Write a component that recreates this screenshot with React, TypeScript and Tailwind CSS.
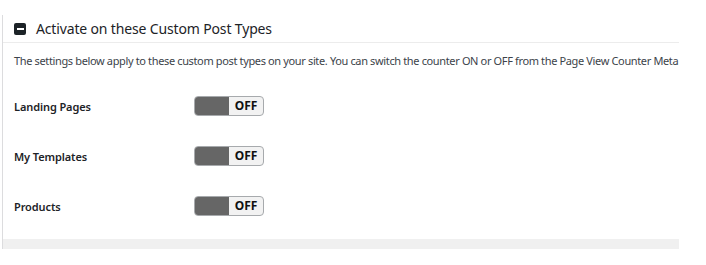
import React from "react";

function Toggle() {
  return (
    <div className="flex h-[20px] w-[70px] overflow-hidden rounded-[4px] border border-[#a7aaad] bg-[#f2f2f2]">
      <div className="h-full w-[34px] bg-[#666666]" />
      <div className="flex flex-1 items-center justify-center text-[12px] font-bold text-[#111]">OFF</div>
    </div>
  );
}

const rows = ["Landing Pages", "My Templates", "Products"];

export default function App() {
  return (
    <div className="h-[265px] w-[706px] bg-white pt-[15px] pl-[2px]" style={{ fontFamily: '"Noto Sans", "Open Sans", sans-serif' }}>
      <div className="w-[677px] border-l border-[#dcdcde]">
        <div className="flex h-[28px] items-center gap-[10px] border-b border-[#ececec] pl-[11px]">
          <div className="flex h-[12px] w-[12px] items-center justify-center rounded-[2px] bg-[#1d2327]">
            <div className="h-[2px] w-[7px] bg-white" />
          </div>
          <div className="text-[14px] tracking-[-0.15px] text-[#1d2327]">Activate on these Custom Post Types</div>
        </div>
        <div className="overflow-hidden whitespace-nowrap pl-[11px] pt-[10px] text-[11px] tracking-[-0.36px] text-[#3c434a]">
          The settings below apply to these custom post types on your site. You can switch the counter ON or OFF from the Page View Counter Meta box.
        </div>
        <div className="mt-[11px] flex flex-col">
          {rows.map((r) => (
            <div key={r} className="flex h-[50px] items-center pl-[11px]">
              <div className="w-[180px] pt-[3px] text-[11px] font-semibold tracking-[-0.1px] text-[#1d2327]">{r}</div>
              <Toggle />
            </div>
          ))}
        </div>
        <div className="h-[8px]" />
        <div className="h-[10px] bg-[#f0f0f0]" />
      </div>
    </div>
  );
}
